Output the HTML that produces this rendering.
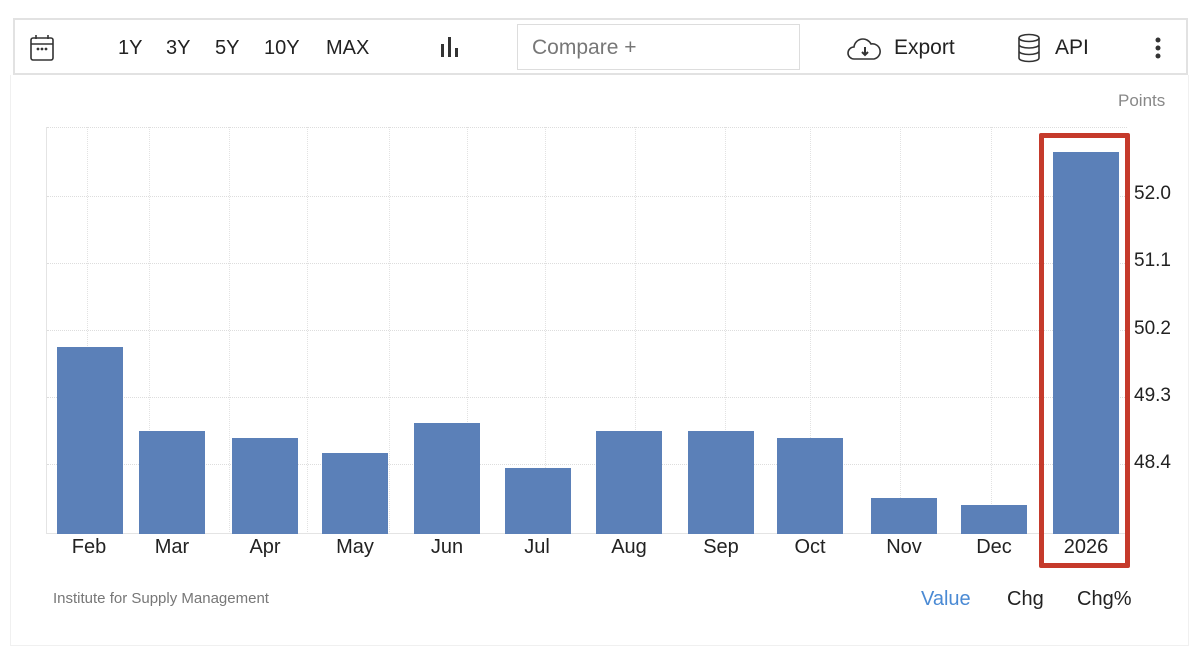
<!DOCTYPE html>
<html><head><style>
*{margin:0;padding:0;box-sizing:border-box}
body{width:1200px;height:662px;background:#fff;font-family:"Liberation Sans",Arial,sans-serif;position:relative;overflow:hidden;color:#222}
.abs{position:absolute}
.tb{left:13px;top:18px;width:1175px;height:57px;border:2px solid #e2e2e2;background:#fff}
.panel{left:10px;top:75px;width:1179px;height:571px;border:1px solid #f0f0f0;border-top:none}
.t{font-size:20px;color:#222;top:37px}
.bar{position:absolute;background:#5b80b8;width:66px;bottom:128px}
.gh{position:absolute;left:47px;width:1080px;height:0;border-top:1px dotted #ddd}
.gv{position:absolute;top:127px;height:407px;width:0;border-left:1px dotted #e2e2e2}
.xl{position:absolute;top:536px;font-size:20px;width:90px;text-align:center;color:#222}
.yl{position:absolute;left:1134px;font-size:19px;color:#222}
</style></head><body>
<div class="abs panel"></div>
<div class="abs tb"></div>
<svg class="abs" style="left:29px;top:34px" width="28" height="30" viewBox="0 0 28 30" fill="none" stroke="#333" stroke-width="1.6"><rect x="2" y="4" width="22" height="22" rx="2"/><line x1="2" y1="10" x2="24" y2="10"/><line x1="7" y1="1" x2="7" y2="5"/><line x1="19" y1="1" x2="19" y2="5"/><circle cx="9" cy="15" r=".6" fill="#333"/><circle cx="13" cy="15" r=".6" fill="#333"/><circle cx="17" cy="15" r=".6" fill="#333"/></svg>
<div class="abs t" style="left:118px">1Y</div>
<div class="abs t" style="left:166px">3Y</div>
<div class="abs t" style="left:215px">5Y</div>
<div class="abs t" style="left:264px">10Y</div>
<div class="abs t" style="left:326px">MAX</div>
<svg class="abs" style="left:440px;top:36px" width="22" height="22"><rect x="1" y="8" width="3" height="13" fill="#333"/><rect x="8" y="1" width="3" height="20" fill="#333"/><rect x="15" y="12" width="3" height="9" fill="#333"/></svg>
<div class="abs" style="left:517px;top:24px;width:283px;height:46px;border:1px solid #ddd;font-size:21px;color:#777;padding:11px 0 0 14px">Compare +</div>
<svg class="abs" style="left:847px;top:36px" width="36" height="26" viewBox="0 0 36 26" fill="none" stroke="#333" stroke-width="1.6"><path d="M9 23H7a6 6 0 0 1 0-12 9 9 0 0 1 17-3 7 7 0 0 1 3 15h-18z"/><path d="M18 11v8M15 16l3 3 3-3" stroke-width="2"/></svg>
<div class="abs t" style="left:894px;font-size:21px;top:36px">Export</div>
<svg class="abs" style="left:1016px;top:33px" width="26" height="30" viewBox="0 0 26 30" fill="none" stroke="#333" stroke-width="1.6"><ellipse cx="13" cy="5" rx="10" ry="3.5"/><path d="M3 5v20c0 2 4.5 3.5 10 3.5s10-1.5 10-3.5V5M3 11.5c0 2 4.5 3.5 10 3.5s10-1.5 10-3.5M3 18c0 2 4.5 3.5 10 3.5s10-1.5 10-3.5"/></svg>
<div class="abs t" style="left:1055px;font-size:21px;top:36px">API</div>
<svg class="abs" style="left:1154px;top:37px" width="8" height="22"><circle cx="4" cy="3" r="2.5" fill="#333"/><circle cx="4" cy="11" r="2.5" fill="#333"/><circle cx="4" cy="19" r="2.5" fill="#333"/></svg>
<div class="abs" style="left:1118px;top:91px;font-size:17px;color:#888">Points</div>

<div class="gh" style="top:127px"></div><div class="gh" style="top:196px"></div><div class="gh" style="top:263px"></div><div class="gh" style="top:330px"></div><div class="gh" style="top:397px"></div><div class="gh" style="top:464px"></div>
<div class="gv" style="left:87px"></div><div class="gv" style="left:149px"></div><div class="gv" style="left:229px"></div><div class="gv" style="left:307px"></div><div class="gv" style="left:389px"></div><div class="gv" style="left:467px"></div><div class="gv" style="left:545px"></div><div class="gv" style="left:635px"></div><div class="gv" style="left:725px"></div><div class="gv" style="left:810px"></div><div class="gv" style="left:900px"></div><div class="gv" style="left:991px"></div>
<div class="abs" style="left:46px;top:127px;width:1px;height:407px;background:#e4e4e4"></div>
<div class="abs" style="left:46px;top:533px;width:1082px;height:1px;background:#e4e4e4"></div>

<div class="bar" style="left:57px;top:347px"></div>
<div class="bar" style="left:139px;top:431px"></div>
<div class="bar" style="left:232px;top:438px"></div>
<div class="bar" style="left:322px;top:453px"></div>
<div class="bar" style="left:414px;top:423px"></div>
<div class="bar" style="left:505px;top:468px"></div>
<div class="bar" style="left:596px;top:431px"></div>
<div class="bar" style="left:688px;top:431px"></div>
<div class="bar" style="left:777px;top:438px"></div>
<div class="bar" style="left:871px;top:498px"></div>
<div class="bar" style="left:961px;top:505px"></div>
<div class="bar" style="left:1053px;top:152px"></div>
<div class="abs" style="left:1039px;top:133px;width:91px;height:435px;border:5px solid #c53a2b;border-radius:2px"></div>

<div class="xl" style="left:44px">Feb</div><div class="xl" style="left:127px">Mar</div><div class="xl" style="left:220px">Apr</div><div class="xl" style="left:310px">May</div><div class="xl" style="left:402px">Jun</div><div class="xl" style="left:492px">Jul</div><div class="xl" style="left:584px">Aug</div><div class="xl" style="left:676px">Sep</div><div class="xl" style="left:765px">Oct</div><div class="xl" style="left:859px">Nov</div><div class="xl" style="left:949px">Dec</div><div class="xl" style="left:1041px">2026</div>

<div class="yl" style="top:183px">52.0</div><div class="yl" style="top:250px">51.1</div><div class="yl" style="top:318px">50.2</div><div class="yl" style="top:385px">49.3</div><div class="yl" style="top:452px">48.4</div>

<div class="abs" style="left:53px;top:590px;font-size:15px;color:#777">Institute for Supply Management</div>
<div class="abs" style="left:921px;top:588px;font-size:20px;color:#4a8ad4">Value</div>
<div class="abs" style="left:1007px;top:588px;font-size:20px;color:#222">Chg</div>
<div class="abs" style="left:1077px;top:588px;font-size:20px;color:#222">Chg%</div>
</body></html>
